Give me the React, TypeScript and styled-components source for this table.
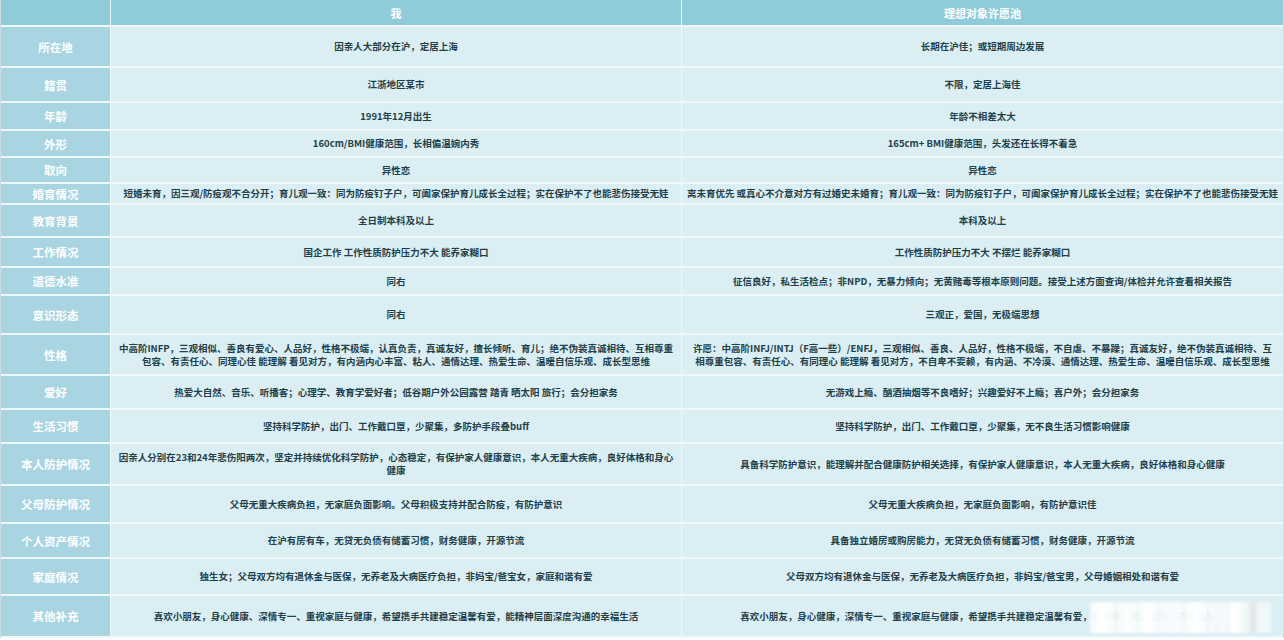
import styled, { createGlobalStyle } from "styled-components";

const COLOR_HEAD = "#8fcbd9";
const COLOR_LABEL = "#a9d5e2";
const COLOR_CELL = "#daeef4";
const COLOR_LINE = "#eef8fb";
const COLOR_TEXT = "#1f3f49";

const GlobalStyle = createGlobalStyle`
  html, body {
    margin: 0;
    padding: 0;
    background: #ffffff;
  }
  body {
    font-family: "Noto Sans CJK SC", "Noto Sans", sans-serif;
  }
`;

const Table = styled.div`
  width: 1284px;
  box-sizing: border-box;
  border-left: 1px solid #c9dde2;
  border-right: 1px solid #c9dde2;
`;

const Row = styled.div<{ $h: number }>`
  display: grid;
  grid-template-columns: 109px 571px 1fr;
  height: ${(p) => p.$h}px;
  box-sizing: border-box;
  border-bottom: 2px solid ${COLOR_LINE};
`;

const HeadCell = styled.div`
  display: flex;
  align-items: center;
  justify-content: center;
  background: ${COLOR_HEAD};
  color: #ffffff;
  font-size: 11px;
  font-weight: 700;
  border-left: 1px solid ${COLOR_LINE};
  &:first-child {
    border-left: none;
  }
`;

const LabelCell = styled.div`
  display: flex;
  align-items: center;
  justify-content: center;
  background: ${COLOR_LABEL};
  color: #ffffff;
  font-size: 11.5px;
  font-weight: 700;
  white-space: nowrap;
`;

const Cell = styled.div`
  position: relative;
  display: flex;
  flex-direction: column;
  align-items: center;
  justify-content: center;
  background: ${COLOR_CELL};
  color: ${COLOR_TEXT};
  font-size: 9.5px;
  font-weight: 700;
  line-height: 13px;
  text-align: center;
  white-space: nowrap;
  overflow: hidden;
  border-left: 1px solid ${COLOR_LINE};
`;

const Line = styled.span`
  display: block;
`;

const Watermark = styled.div`
  position: absolute;
  left: 408px;
  right: 12px;
  top: 6px;
  bottom: 3px;
  display: flex;
  align-items: stretch;
  gap: 3px;
  background: rgba(240, 248, 250, 0.92);
  filter: blur(1.6px);
`;

const Blot = styled.div<{ $w: number; $c: string }>`
  width: ${(p) => p.$w}px;
  background: linear-gradient(
    90deg,
    rgba(255, 255, 255, 0.5),
    ${(p) => p.$c},
    rgba(255, 255, 255, 0.6)
  );
`;

interface Item {
  label: string;
  h: number;
  me: string[];
  want: string[];
}

const rows: Item[] = [
  { label: "所在地", h: 41, me: ["因亲人大部分在沪，定居上海"], want: ["长期在沪佳；或短期周边发展"] },
  { label: "籍贯", h: 35, me: ["江浙地区某市"], want: ["不限，定居上海佳"] },
  { label: "年龄", h: 28, me: ["1991年12月出生"], want: ["年龄不相差太大"] },
  { label: "外形", h: 27, me: ["160cm/BMI健康范围，长相偏温婉内秀"], want: ["165cm+  BMI健康范围，头发还在长得不着急"] },
  { label: "取向", h: 26, me: ["异性恋"], want: ["异性恋"] },
  {
    label: "婚育情况",
    h: 21,
    me: ["短婚未育，因三观/防疫观不合分开；育儿观一致：同为防疫钉子户，可阖家保护育儿成长全过程；实在保护不了也能悲伤接受无娃"],
    want: ["离未育优先 或真心不介意对方有过婚史未婚育；育儿观一致：同为防疫钉子户，可阖家保护育儿成长全过程；实在保护不了也能悲伤接受无娃"],
  },
  { label: "教育背景", h: 33, me: ["全日制本科及以上"], want: ["本科及以上"] },
  { label: "工作情况", h: 30, me: ["国企工作 工作性质防护压力不大 能养家糊口"], want: ["工作性质防护压力不大 不摆烂 能养家糊口"] },
  {
    label: "道德水准",
    h: 28,
    me: ["同右"],
    want: ["征信良好，私生活检点；非NPD，无暴力倾向；无黄赌毒等根本原则问题。接受上述方面查询/体检并允许查看相关报告"],
  },
  { label: "意识形态", h: 39, me: ["同右"], want: ["三观正，爱国，无极端思想"] },
  {
    label: "性格",
    h: 41,
    me: [
      "中高阶INFP，三观相似、善良有爱心、人品好，性格不极端，认真负责，真诚友好，擅长倾听、育儿；绝不伪装真诚相待、互相尊重",
      "包容、有责任心、同理心佳 能理解 看见对方，有内涵内心丰富、粘人、通情达理、热爱生命、温暖自信乐观、成长型思维",
    ],
    want: [
      "许愿：中高阶INFJ/INTJ（F高一些）/ENFJ，三观相似、善良、人品好，性格不极端，不自虐、不暴躁；真诚友好，绝不伪装真诚相待、互",
      "相尊重包容、有责任心、有同理心 能理解 看见对方，不自卑不耍赖，有内涵、不冷漠、通情达理、热爱生命、温暖自信乐观、成长型思维",
    ],
  },
  {
    label: "爱好",
    h: 34,
    me: ["热爱大自然、音乐、听播客；心理学、教育学爱好者；低谷期户外公园露营 踏青 晒太阳 旅行；会分担家务"],
    want: ["无游戏上瘾、酗酒抽烟等不良嗜好；兴趣爱好不上瘾；喜户外；会分担家务"],
  },
  {
    label: "生活习惯",
    h: 34,
    me: ["坚持科学防护，出门、工作戴口罩，少聚集，多防护手段叠buff"],
    want: ["坚持科学防护，出门、工作戴口罩，少聚集，无不良生活习惯影响健康"],
  },
  {
    label: "本人防护情况",
    h: 42,
    me: ["因亲人分别在23和24年悲伤阳两次，坚定并持续优化科学防护，心态稳定，有保护家人健康意识，本人无重大疾病，良好体格和身心", "健康"],
    want: ["具备科学防护意识，能理解并配合健康防护相关选择，有保护家人健康意识，本人无重大疾病，良好体格和身心健康"],
  },
  {
    label: "父母防护情况",
    h: 38,
    me: ["父母无重大疾病负担，无家庭负面影响。父母积极支持并配合防疫，有防护意识"],
    want: ["父母无重大疾病负担，无家庭负面影响，有防护意识佳"],
  },
  {
    label: "个人资产情况",
    h: 35,
    me: ["在沪有房有车，无贷无负债有储蓄习惯，财务健康，开源节流"],
    want: ["具备独立婚房或购房能力，无贷无负债有储蓄习惯，财务健康，开源节流"],
  },
  {
    label: "家庭情况",
    h: 37,
    me: ["独生女；父母双方均有退休金与医保，无养老及大病医疗负担，非妈宝/爸宝女，家庭和谐有爱"],
    want: ["父母双方均有退休金与医保，无养老及大病医疗负担，非妈宝/爸宝男，父母婚姻相处和谐有爱"],
  },
  {
    label: "其他补充",
    h: 42,
    me: ["喜欢小朋友，身心健康、深情专一、重视家庭与健康，希望携手共建稳定温馨有爱，能精神层面深度沟通的幸福生活"],
    want: ["喜欢小朋友，身心健康，深情专一、重视家庭与健康，希望携手共建稳定温馨有爱，能精神层面深度沟通的幸福生活"],
  },
];

const blots = [
  { w: 24, c: "#ffffff" },
  { w: 19, c: "#fbfdfe" },
  { w: 18, c: "#ffffff" },
  { w: 22, c: "#f8fbfc" },
  { w: 21, c: "#ffffff" },
  { w: 16, c: "#f4f8f9" },
  { w: 14, c: "#ffffff" },
  { w: 16, c: "#dfe6e8" },
];

const Lines = ({ items }: { items: string[] }) => (
  <>
    {items.map((t, i) => (
      <Line key={i}>{t}</Line>
    ))}
  </>
);

export default function App() {
  return (
    <>
      <GlobalStyle />
      <Table>
        <Row $h={27}>
          <HeadCell />
          <HeadCell>我</HeadCell>
          <HeadCell>理想对象许愿池</HeadCell>
        </Row>
        {rows.map((r, i) => (
          <Row key={r.label} $h={r.h}>
            <LabelCell>{r.label}</LabelCell>
            <Cell>
              <Lines items={r.me} />
            </Cell>
            <Cell>
              <Lines items={r.want} />
              {i === rows.length - 1 && (
                <Watermark>
                  {blots.map((b, j) => (
                    <Blot key={j} $w={b.w} $c={b.c} />
                  ))}
                </Watermark>
              )}
            </Cell>
          </Row>
        ))}
      </Table>
    </>
  );
}
